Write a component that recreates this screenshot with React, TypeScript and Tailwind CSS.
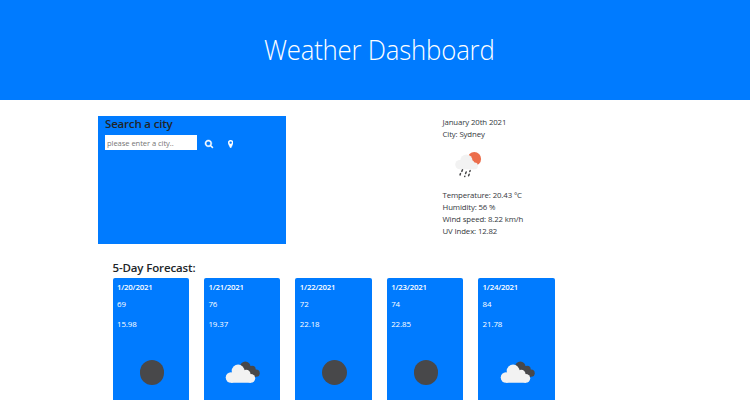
const forecast = [
  { date: "1/20/2021", temp: "69", humidity: "15.98", cloudy: false },
  { date: "1/21/2021", temp: "76", humidity: "19.37", cloudy: true },
  { date: "1/22/2021", temp: "72", humidity: "22.18", cloudy: false },
  { date: "1/23/2021", temp: "74", humidity: "22.85", cloudy: false },
  { date: "1/24/2021", temp: "84", humidity: "21.78", cloudy: true },
];

function SearchIcon() {
  return (
    <svg viewBox="0 0 1664 1664" className="size-[8px] overflow-visible fill-white stroke-white stroke-[90]">
      <path transform="translate(0 -128)" d="M1152 832q0-185-131.500-316.500t-316.500-131.500-316.500 131.500-131.500 316.500 131.500 316.500 316.500 131.500 316.500-131.500 131.500-316.500zm512 832q0 52-38 90t-90 38q-54 0-90-38l-343-342q-179 124-399 124-143 0-273.500-55.500t-225-150-150-225-55.500-273.500 55.500-273.500 150-225 225-150 273.500-55.500 273.500 55.500 225 150 150 225 55.500 273.500q0 220-124 399l343 343q37 37 37 90z" />
    </svg>
  );
}

function MarkerIcon() {
  return (
    <svg viewBox="384 128 1024 1536" className="h-[8px] w-[5.300px] fill-white stroke-white stroke-[60]">
      <path d="M1152 640q0-106-75-181t-181-75-181 75-75 181 75 181 181 75 181-75 75-181zm256 0q0 109-33 179l-364 774q-16 33-47.500 52t-67.500 19-67.500-19-46.500-52l-365-774q-33-70-33-179 0-212 150-362t362-150 362 150 150 362z" />
    </svg>
  );
}

function RainIcon() {
  return (
    <svg viewBox="0 0 28 27" className="h-[27px] w-[28px]">
      <circle cx="19.300" cy="6.900" r="6.800" fill="#ec6e4c" />
      <g fill="#f2f2f2">
        <circle cx="4.900" cy="12.600" r="4.700" />
        <circle cx="11.400" cy="8.500" r="6.100" />
        <circle cx="16" cy="11.500" r="3.300" />
        <circle cx="19.500" cy="13.900" r="3.400" />
        <rect x="5" y="10.500" width="14.500" height="6.800" />
      </g>
      <path
        d="M7.500 17.700l-.7 1.700M5.500 21.600l-.5 1.300M11.200 20l-.6 1.600M9.800 24.300l-.1.300M15.200 18.600l-.4.900M14.200 22.300l-.6 1.500"
        stroke="#48484a"
        strokeWidth="1.500"
        strokeLinecap="round"
      />
    </svg>
  );
}

function CloudsIcon() {
  return (
    <svg viewBox="0 0 35 22" className="h-[22px] w-[35px]">
      <g fill="#48484a">
        <circle cx="20.300" cy="5.800" r="5.200" />
        <circle cx="27.200" cy="8.300" r="3.500" />
        <circle cx="31.100" cy="12.200" r="3.600" />
        <path d="M20 7l6-2 5 5v5.800H24z" />
      </g>
      <g fill="#f2f2f2">
        <circle cx="5.900" cy="16.500" r="5.200" />
        <circle cx="13.100" cy="10" r="6.400" />
        <circle cx="21.200" cy="13" r="4.300" />
        <circle cx="25.800" cy="17.300" r="4.400" />
        <path d="M6 12l7-3 8 3 5 4v5.700H6z" />
      </g>
    </svg>
  );
}

export default function App() {
  return (
    <div className="h-[400px] w-[750px] overflow-hidden bg-white font-['Open_Sans',sans-serif] text-[#212529]">
      <header className="flex h-[100px] items-center justify-center bg-[#007bff] pb-[3px] pl-[8px]">
        <h1 className="scale-x-[0.920] text-[28px] leading-[36px] font-light tracking-[-0.220px] whitespace-nowrap text-white">Weather Dashboard</h1>
      </header>

      <div className="flex pt-[16px] pl-[98px]">
        <section className="h-[128px] w-[187.500px] bg-[#007bff] pl-[7px]">
          <h2 className="h-[19px] text-[11.500px] leading-[16px] font-semibold tracking-[-0.180px] whitespace-nowrap">Search a city</h2>
          <div className="flex h-[15px]">
            <input
              className="h-[15px] w-[92px] bg-white px-[2px] text-[7.600px] tracking-[-0.070px] text-[#212529] outline-none placeholder:text-[#757575]"
              placeholder="please enter a city.."
            />
            <button className="ml-[8px] flex h-[18px] items-center"><SearchIcon /></button>
            <button className="ml-[15px] flex h-[18px] items-center"><MarkerIcon /></button>
          </div>
        </section>
        <section className="ml-[157px] text-[7.800px] leading-[12px] tracking-[-0.120px] whitespace-nowrap text-[#34383c]">
          <p>January 20th 2021</p>
          <p>City: Sydney</p>
          <div className="h-[49px] pt-[12px] pl-[12px]"><RainIcon /></div>
          <p>Temperature: 20.43 °C</p>
          <p>Humidity: 56 %</p>
          <p>Wind speed: 8.22 km/h</p>
          <p>UV Index: 12.82</p>
        </section>
      </div>

      <section className="pt-[16px] pl-[112.500px]">
        <h2 className="h-[18px] text-[11.500px] leading-[16px] font-semibold tracking-[-0.130px] whitespace-nowrap">5-Day Forecast:</h2>
        <div className="flex gap-[14.900px]">
          {forecast.map((day) => (
            <article
              key={day.date}
              className="flex h-[140px] w-[76.500px] shrink-0 flex-col rounded-[2px] bg-[#007bff] pt-[3px] pl-[4.500px] text-[7.900px] leading-[12px] tracking-[-0.080px] text-white"
            >
              <h3 className="h-[17px] text-[7.800px] font-semibold tracking-[-0.200px]">{day.date}</h3>
              <p className="h-[20px]">{day.temp}</p>
              <p className="h-[42px]">{day.humidity}</p>
              {day.cloudy ? (
                <div className="pl-[17px] pt-px"><CloudsIcon /></div>
              ) : (
                <div className="ml-[22.500px] size-[24.500px] rounded-full bg-[#48484a]" />
              )}
            </article>
          ))}
        </div>
      </section>
    </div>
  );
}
